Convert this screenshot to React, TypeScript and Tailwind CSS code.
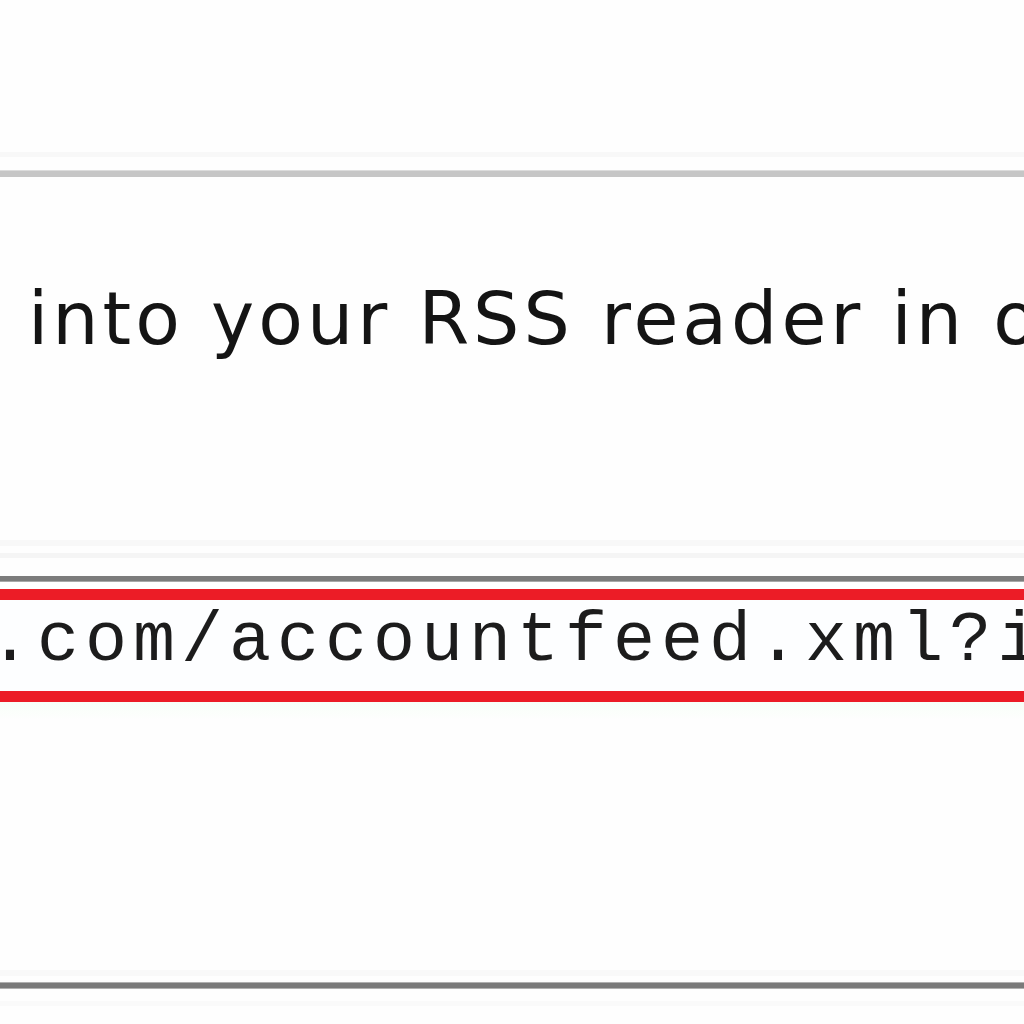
export default function App() {
  return (
    <div className="w-[1024px] h-[1024px] bg-[#fefefe] overflow-hidden flex flex-col">
      <div className="h-[152px] shrink-0" />
      <div className="h-[5px] shrink-0 bg-[#f8f8f8]" />
      <div className="h-[13px] shrink-0" />
      <div className="h-[7px] shrink-0 bg-[#c6c6c6] border-t border-[#dcdcdc]" />
      <div className="h-[363px] shrink-0 pt-[105px] overflow-hidden">
        <div
          className="flex whitespace-nowrap text-[73px] leading-[73px] tracking-[4px] text-[#141414]"
          style={{ fontFamily: '"DejaVu Sans", Verdana, sans-serif' }}
        >
          <div className="w-[28px] shrink-0 flex justify-end">
            <span>link&nbsp;</span>
          </div>
          <span>into your RSS reader in order to receive updates</span>
        </div>
      </div>
      <div className="h-[6px] shrink-0 bg-[#f8f8f8]" />
      <div className="h-[7px] shrink-0" />
      <div className="h-[5px] shrink-0 bg-[#f5f5f5]" />
      <div className="h-[18px] shrink-0" />
      <div className="h-[6px] shrink-0 bg-[#7c7c7c] border-b border-[#a8a8a8]" />
      <div className="h-[7px] shrink-0 bg-white" />
      <div className="h-[11px] shrink-0 bg-[#ec1c26]" />
      <div className="h-[91px] shrink-0 bg-[#fdfeff] pt-[7px] overflow-hidden">
        <div
          className="ml-[-11px] whitespace-nowrap text-[70px] leading-[70px] tracking-[6px] text-[#1c1c1c]"
          style={{ fontFamily: '"Courier New", "Liberation Mono", monospace' }}
        >
          .com/accountfeed.xml?id=1234567890
        </div>
      </div>
      <div className="h-[11px] shrink-0 bg-[#ec1c26]" />
      <div className="h-[18px] shrink-0 bg-gradient-to-b from-[#f7fff7] to-[#fefefe]" />
      <div className="h-[250px] shrink-0" />
      <div className="h-[6px] shrink-0 bg-[#f9f9f9]" />
      <div className="h-[6px] shrink-0" />
      <div className="h-[7px] shrink-0 bg-[#7a7a7a] border-y border-[#b0b0b0]" />
      <div className="h-[12px] shrink-0" />
      <div className="h-[5px] shrink-0 bg-[#fafafa]" />
      <div className="flex-1" />
    </div>
  );
}
